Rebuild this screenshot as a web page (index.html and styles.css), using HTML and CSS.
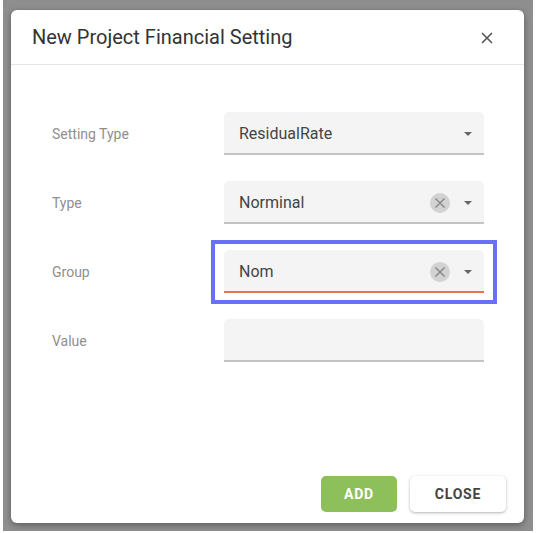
FILE: index.html
```html
<!DOCTYPE html>
<html lang="en">
<head>
    <meta charset="UTF-8">
    <title>New Project Financial Setting</title>
    <link rel="stylesheet" href="styles.css">
</head>
<body>
    <div class="backdrop">
        <div class="dialog">
            <!-- Header -->
            <div class="dialog-header">
                <span class="dialog-title">New Project Financial Setting</span>
                <svg class="close-icon" width="14" height="14" viewBox="0 0 14 14">
                    <path d="M2 2 L12 12 M12 2 L2 12" stroke="#555" stroke-width="1.6" fill="none"/>
                </svg>
            </div>

            <!-- Form -->
            <div class="dialog-body">
                <div class="row">
                    <label class="row-label">Setting Type</label>
                    <div class="field">
                        <span class="field-value">ResidualRate</span>
                        <span class="arrow"></span>
                    </div>
                </div>
                <div class="row">
                    <label class="row-label">Type</label>
                    <div class="field">
                        <span class="field-value">Norminal</span>
                        <span class="clear">
                            <svg width="20" height="20" viewBox="0 0 20 20">
                                <circle cx="10" cy="10" r="10" fill="#d2d2d2"/>
                                <path d="M5.5 5.5 L14.5 14.5 M14.5 5.5 L5.5 14.5" stroke="#8a8a8a" stroke-width="1.5"/>
                            </svg>
                        </span>
                        <span class="arrow"></span>
                    </div>
                </div>
                <div class="row">
                    <label class="row-label">Group</label>
                    <div class="highlight">
                        <div class="field field-focused">
                            <span class="field-value">Nom</span>
                            <span class="clear">
                                <svg width="20" height="20" viewBox="0 0 20 20">
                                    <circle cx="10" cy="10" r="10" fill="#d2d2d2"/>
                                    <path d="M5.5 5.5 L14.5 14.5 M14.5 5.5 L5.5 14.5" stroke="#8a8a8a" stroke-width="1.5"/>
                                </svg>
                            </span>
                            <span class="arrow"></span>
                        </div>
                    </div>
                </div>
                <div class="row">
                    <label class="row-label">Value</label>
                    <div class="field"></div>
                </div>
            </div>

            <!-- Footer -->
            <div class="dialog-footer">
                <button class="btn btn-add">ADD</button>
                <button class="btn btn-close">CLOSE</button>
            </div>
        </div>
    </div>
</body>
</html>
```

FILE: styles.css
```css
body {
    margin: 0;
    background-color: #fff;
    font-family: Roboto, "Liberation Sans", sans-serif;
}
.backdrop {
    margin: 0 3px;
    width: 530px;
    height: 531px;
    box-sizing: border-box;
    padding: 10px 9px 8px 8px;
    background-color: #8e8e8e;
}
.dialog {
    height: 513px;
    background-color: #fff;
    border-radius: 6px;
    box-shadow: 0 2px 6px rgba(0, 0, 0, 0.35);
    display: flex;
    flex-direction: column;
}
.dialog-header {
    height: 55px;
    box-sizing: border-box;
    border-bottom: 1px solid #e6e6e6;
    display: flex;
    align-items: center;
    justify-content: space-between;
    padding: 0 30px 0 21px;
}
.dialog-title {
    font-size: 20px;
    color: #333;
}
.close-icon {
    margin-top: 2px;
}
.dialog-body {
    flex: 1;
    padding: 47px 40px 0 41px;
    display: flex;
    flex-direction: column;
    gap: 26px;
}
.row {
    display: flex;
    align-items: center;
    height: 43px;
}
.row-label {
    width: 172px;
    font-size: 14px;
    color: #8f8f8f;
}
.field {
    width: 260px;
    height: 43px;
    box-sizing: border-box;
    background-color: #f4f4f4;
    border-radius: 5px 5px 0 0;
    border-bottom: 2px solid #c4c4c4;
    display: flex;
    align-items: center;
    padding: 2px 12px 0 15px;
}
.field-focused {
    border-bottom-color: #e8744e;
}
.field-value {
    flex: 1;
    font-size: 16px;
    color: #444;
}
.clear {
    display: flex;
    margin-right: 14px;
}
.arrow {
    width: 0;
    height: 0;
    border-left: 4px solid transparent;
    border-right: 4px solid transparent;
    border-top: 4px solid #666;
}
.highlight {
    margin: -10px -13px -11px -13px;
    padding: 6px 9px 7px 9px;
    border: 4px solid #6770f7;
}
.dialog-footer {
    display: flex;
    justify-content: flex-end;
    gap: 13px;
    padding: 0 18px 11px 0;
}
.btn {
    height: 36px;
    border: none;
    border-radius: 5px;
    font-family: Roboto, "Liberation Sans", sans-serif;
    font-size: 14px;
    font-weight: bold;
    letter-spacing: 0.8px;
}
.btn-add {
    width: 76px;
    background-color: #8dc05a;
    color: #fff;
}
.btn-close {
    width: 96px;
    background-color: #fff;
    color: #444;
    box-shadow: 0 1px 3px rgba(0, 0, 0, 0.3);
}
```
